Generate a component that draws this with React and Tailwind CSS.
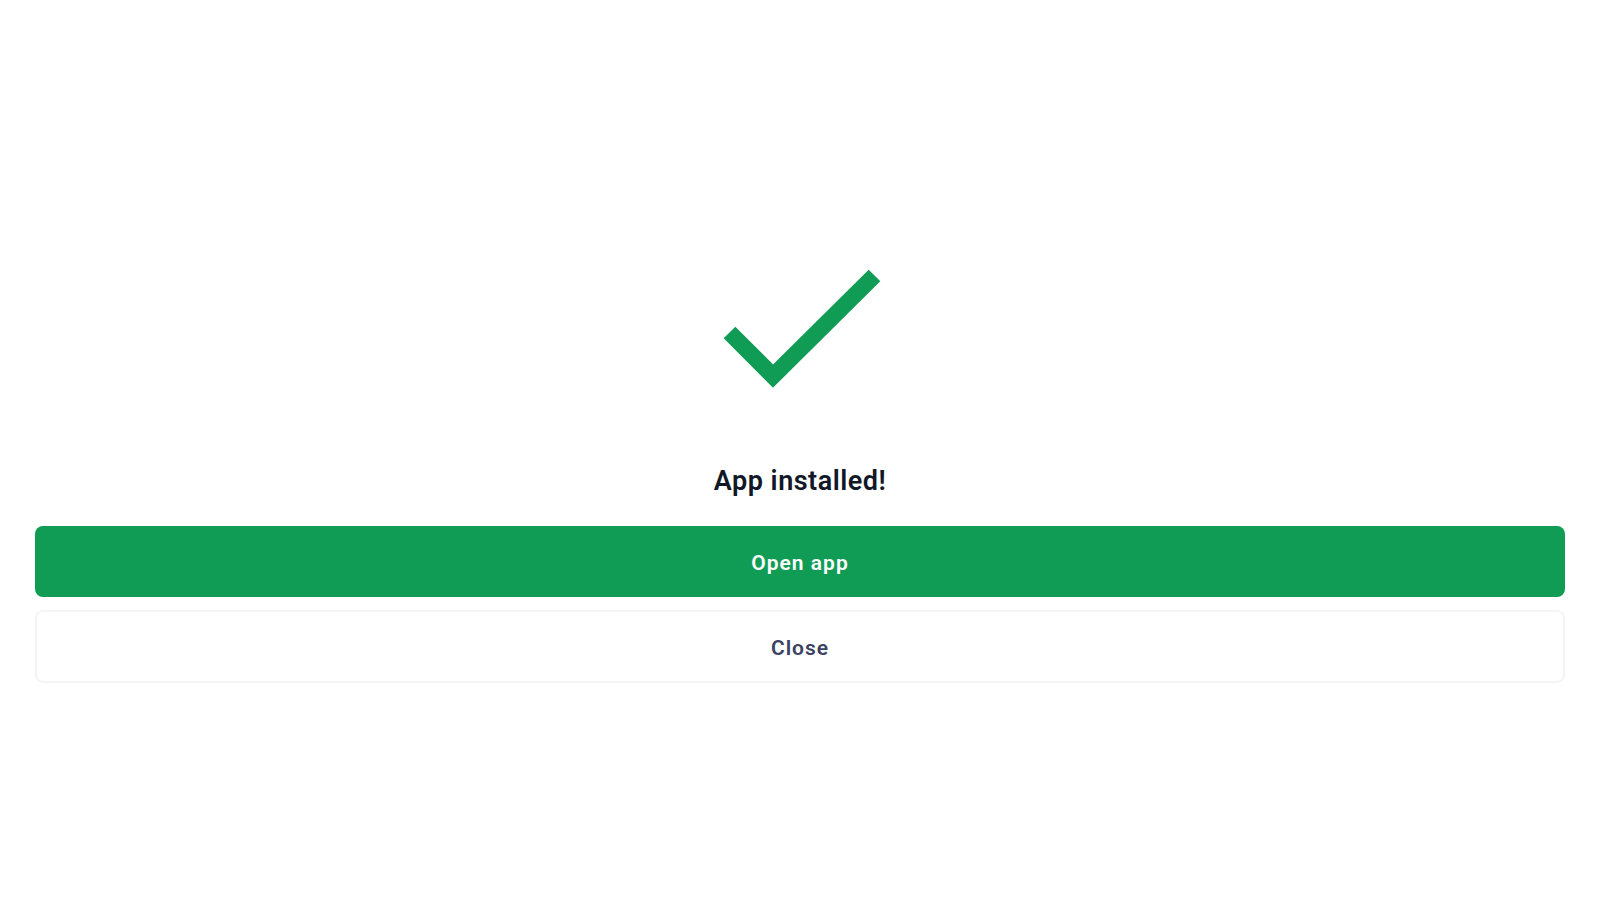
const CheckMark = () => (
  <svg width="170" height="130" viewBox="0 0 170 130" fill="none">
    <path
      d="M14.5 67.5 L58 111 L159.5 10.5"
      stroke="#119c56"
      strokeWidth="16.5"
      strokeLinecap="butt"
      strokeLinejoin="miter"
    />
  </svg>
);

export default function App() {
  return (
    <div className="min-h-screen bg-white px-[35px] pt-[265px] flex flex-col items-center font-['Roboto',sans-serif]">
      <CheckMark />

      <h1 className="mt-[70px] h-8 leading-8 text-[27px] font-semibold tracking-[0.5px] text-[#111827]">
        App installed!
      </h1>

      <button className="mt-[29px] w-full h-[71px] pt-1 rounded-lg bg-[#119c56] text-white text-[21px] font-semibold tracking-[1px]">
        Open app
      </button>

      <button className="mt-[13px] w-full h-[73px] pt-1 rounded-lg border-2 border-[#f3f4f6] bg-white text-[#3b4262] text-[21px] font-semibold tracking-[1px]">
        Close
      </button>
    </div>
  );
}
